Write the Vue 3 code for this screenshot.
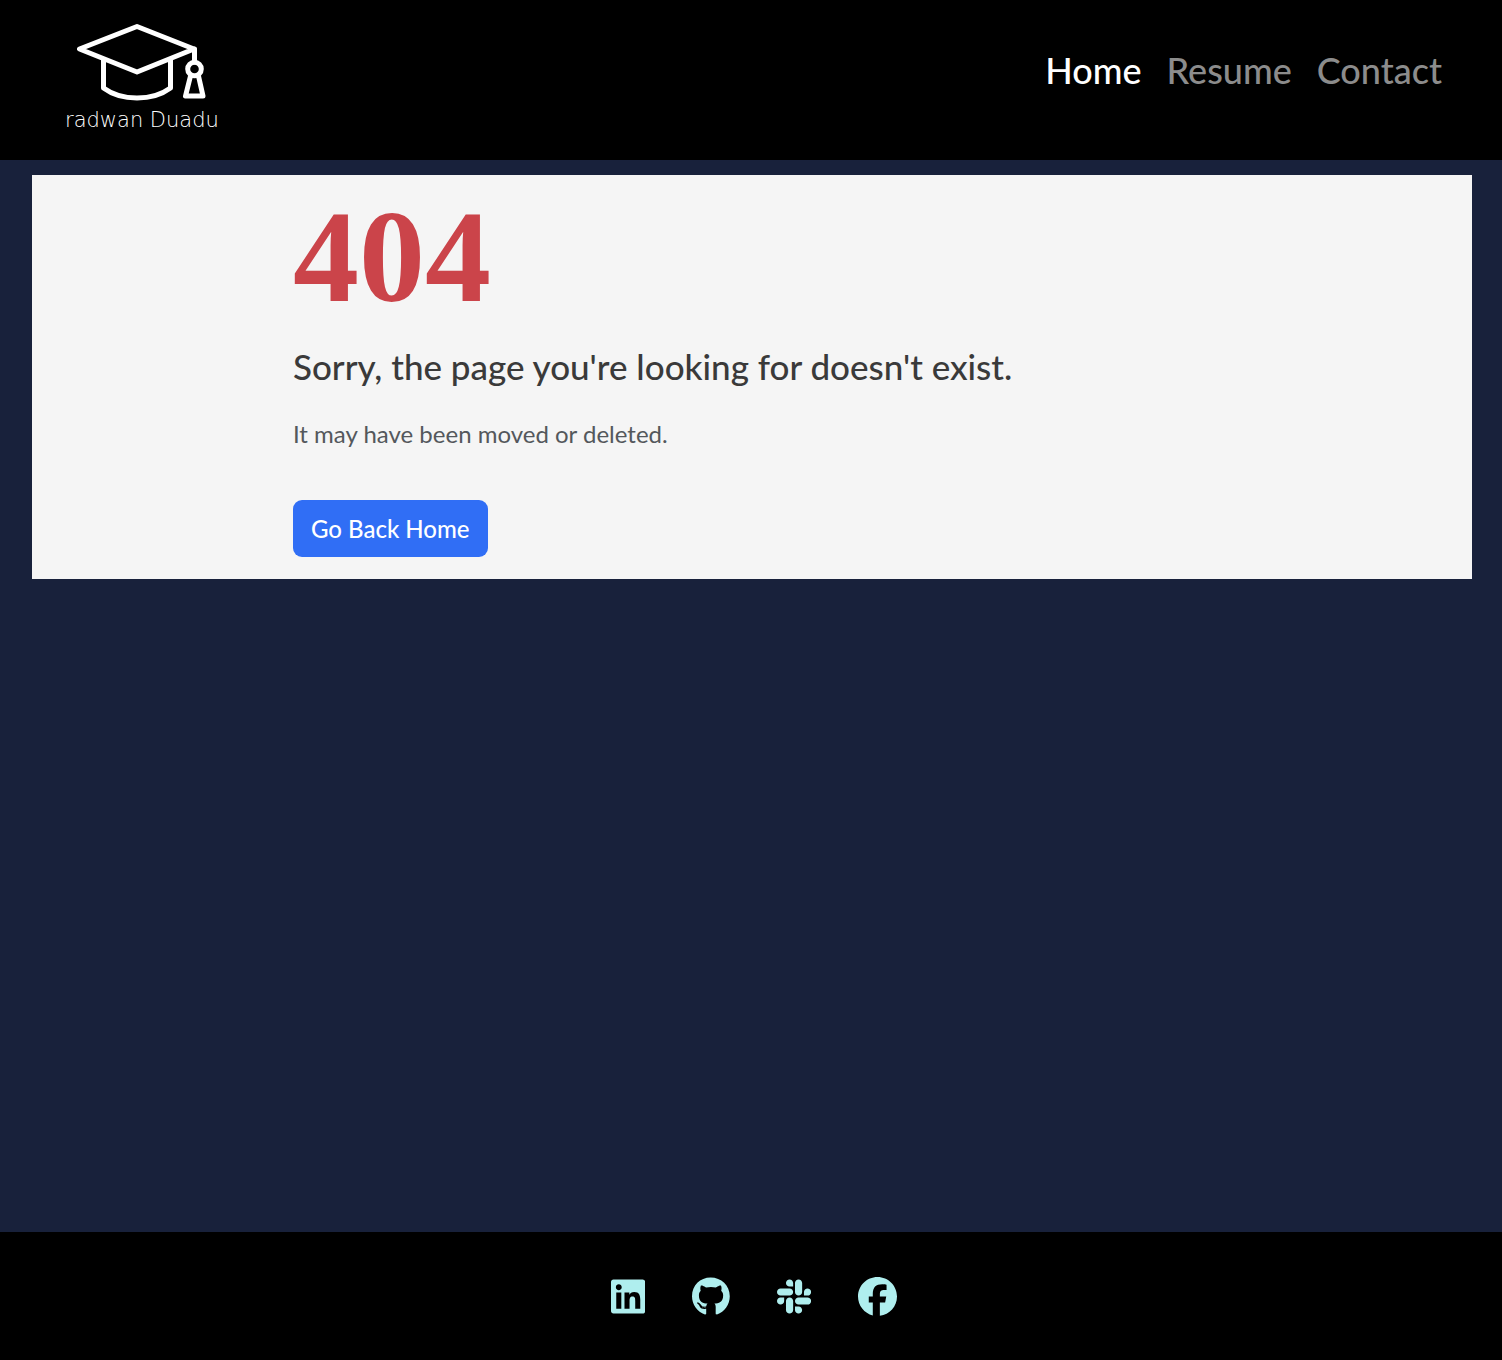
<script setup>
const links = [
  { label: 'Home', active: true },
  { label: 'Resume', active: false },
  { label: 'Contact', active: false },
]

const socials = [
  {
    name: 'LinkedIn',
    width: 448,
    path: 'M416 32H31.9C14.3 32 0 46.5 0 64.3v383.4C0 465.5 14.3 480 31.9 480H416c17.6 0 32-14.5 32-32.3V64.3c0-17.8-14.4-32.3-32-32.3zM135.4 416H69V202.2h66.5V416zm-33.2-243c-21.3 0-38.5-17.3-38.5-38.5S80.9 96 102.2 96c21.2 0 38.5 17.3 38.5 38.5 0 21.3-17.2 38.5-38.5 38.5zm282.1 243h-66.4V312c0-24.8-.5-56.7-34.5-56.7-34.6 0-39.9 27-39.9 54.9V416h-66.4V202.2h63.7v29.2h.9c8.9-16.8 30.6-34.5 62.9-34.5 67.2 0 79.7 44.3 79.7 101.9V416z',
  },
  {
    name: 'GitHub',
    width: 496,
    path: 'M165.9 397.4c0 2-2.3 3.6-5.2 3.6-3.3.3-5.6-1.3-5.6-3.6 0-2 2.3-3.6 5.2-3.6 3-.3 5.6 1.3 5.6 3.6zm-31.1-4.5c-.7 2 1.3 4.3 4.3 4.9 2.6 1 5.6 0 6.2-2s-1.3-4.3-4.3-5.2c-2.6-.7-5.5.3-6.2 2.3zm44.2-1.7c-2.9.7-4.9 2.6-4.6 4.9.3 2 2.9 3.3 5.9 2.6 2.9-.7 4.9-2.6 4.6-4.6-.3-1.9-3-3.2-5.9-2.9zM244.8 8C106.1 8 0 113.3 0 252c0 110.9 69.8 205.8 169.5 239.2 12.8 2.3 17.3-5.6 17.3-12.1 0-6.2-.3-40.4-.3-61.4 0 0-70 15-84.7-29.8 0 0-11.4-29.1-27.8-36.6 0 0-22.9-15.7 1.6-15.4 0 0 24.9 2 38.6 25.8 21.9 38.6 58.6 27.5 72.9 20.9 2.3-16 8.8-27.1 16-33.7-55.9-6.2-112.3-14.3-112.3-110.5 0-27.5 7.6-41.3 23.6-58.9-2.6-6.5-11.1-33.3 2.6-67.9 20.9-6.5 69 27 69 27 20-5.6 41.5-8.5 62.8-8.5s42.8 2.9 62.8 8.5c0 0 48.1-33.6 69-27 13.7 34.7 5.2 61.4 2.6 67.9 16 17.7 25.8 31.5 25.8 58.9 0 96.5-58.9 104.2-114.8 110.5 9.2 7.9 17 22.9 17 46.4 0 33.7-.3 75.4-.3 83.6 0 6.5 4.6 14.4 17.3 12.1C428.2 457.8 496 362.9 496 252 496 113.3 383.5 8 244.8 8z',
  },
  {
    name: 'Slack',
    width: 448,
    path: 'M94.12 315.1c0 25.9-21.16 47.06-47.06 47.06S0 341 0 315.1c0-25.9 21.16-47.06 47.06-47.06h47.06v47.06zm23.72 0c0-25.9 21.16-47.06 47.06-47.06s47.06 21.16 47.06 47.06v117.84c0 25.9-21.16 47.06-47.06 47.06s-47.06-21.16-47.06-47.06V315.1zm47.06-188.98c-25.9 0-47.06-21.16-47.06-47.06S139 32 164.9 32s47.06 21.16 47.06 47.06v47.06H164.9zm0 23.72c25.9 0 47.06 21.16 47.06 47.06s-21.16 47.06-47.06 47.06H47.06C21.16 243.96 0 222.8 0 196.9s21.16-47.06 47.06-47.06H164.9zm188.98 47.06c0-25.9 21.16-47.06 47.06-47.06 25.9 0 47.06 21.16 47.06 47.06s-21.16 47.06-47.06 47.06h-47.06V196.9zm-23.72 0c0 25.9-21.16 47.06-47.06 47.06-25.9 0-47.06-21.16-47.06-47.06V79.06c0-25.9 21.16-47.06 47.06-47.06 25.9 0 47.06 21.16 47.06 47.06V196.9zM283.1 385.88c25.9 0 47.06 21.16 47.06 47.06 0 25.9-21.16 47.06-47.06 47.06-25.9 0-47.06-21.16-47.06-47.06v-47.06h47.06zm0-23.72c-25.9 0-47.06-21.16-47.06-47.06 0-25.9 21.16-47.06 47.06-47.06h117.84c25.9 0 47.06 21.16 47.06 47.06 0 25.9-21.16 47.06-47.06 47.06H283.1z',
  },
  {
    name: 'Facebook',
    width: 512,
    path: 'M512 256C512 114.6 397.4 0 256 0S0 114.6 0 256C0 376 82.7 476.8 194.2 504.5V334.2H141.4V256h52.8V222.3c0-87.1 39.4-127.5 125-127.5c16.2 0 44.2 3.2 55.7 6.4V172c-6-.6-16.5-1-29.6-1c-42 0-58.2 15.9-58.2 57.2V256h83.6l-14.4 78.2H287V510.1C413.8 494.8 512 386.9 512 256z',
  },
]
</script>

<template>
  <div class="page">
    <header class="header">
      <a class="brand" href="#">
        <svg class="cap" viewBox="0 0 132 80" aria-hidden="true">
          <g fill="none" stroke="#fff" stroke-width="5" stroke-linejoin="round" stroke-linecap="round">
            <path d="M60 4.500 117 27 60 50 2.500 27Z" />
            <path d="M26.500 38V66Q40 76 60 76T93.500 66V38" />
            <path d="M117.500 27V40" />
            <circle cx="117.500" cy="47" r="6.800" />
            <path d="M113.500 54 108.500 74H126L121.500 54" />
          </g>
        </svg>
        <span class="brand-name">radwan Duadu</span>
      </a>
      <nav class="nav">
        <a
          v-for="link in links"
          :key="link.label"
          href="#"
          class="nav-link"
          :class="{ active: link.active }"
        >{{ link.label }}</a>
      </nav>
    </header>

    <main class="main">
      <section class="card">
        <div class="message">
          <h1 class="code">404</h1>
          <h2 class="title">Sorry, the page you're looking for doesn't exist.</h2>
          <p class="detail">It may have been moved or deleted.</p>
          <button type="button" class="home-button">Go Back Home</button>
        </div>
      </section>
    </main>

    <footer class="footer">
      <a v-for="item in socials" :key="item.name" href="#" class="social" :aria-label="item.name">
        <svg class="social-icon" :viewBox="`0 0 ${item.width} 512`" aria-hidden="true">
          <path :d="item.path" />
        </svg>
      </a>
    </footer>
  </div>
</template>

<style>
body {
  margin: 0;
  background: #18213b;
}
</style>

<style scoped>
.page {
  display: flex;
  flex-direction: column;
  min-height: 100vh;
  background: #18213b;
  font-family: Lato, "Liberation Sans", sans-serif;
}

.header {
  display: flex;
  justify-content: space-between;
  align-items: flex-start;
  box-sizing: border-box;
  min-height: 160px;
  padding: 22px 60px 24px 65px;
  background: #000;
}

.brand {
  display: flex;
  flex-direction: column;
  gap: 6px;
  color: #fff;
  text-decoration: none;
}

.cap {
  width: 132px;
  height: 80px;
  margin-left: 12px;
}

.brand-name {
  font-family: "DejaVu Sans", sans-serif;
  font-weight: 200;
  font-size: 21px;
  line-height: 24px;
  white-space: nowrap;
}

.nav {
  display: flex;
  gap: 25px;
  padding-top: 24px;
}

.nav-link {
  color: #8c8c8c;
  font-size: 36px;
  font-weight: 500;
  line-height: 48px;
  text-decoration: none;
}

.nav-link.active {
  color: #fff;
}

.main {
  flex: 1;
  padding: 15px 30px 15px 32px;
}

.card {
  padding: 24px 24px 22px;
  background: #f5f5f5;
}

.message {
  max-width: 918px;
  margin: 0 auto;
}

.code {
  margin: 0 0 27px;
  color: #cb444a;
  font-family: "Liberation Serif", serif;
  font-size: 132px;
  font-weight: 700;
  line-height: 116px;
}

.title {
  margin: 0 0 26px;
  color: #3a3a3a;
  font-size: 35px;
  font-weight: 500;
  line-height: 48px;
}

.detail {
  margin: 0 0 48px;
  color: #54585c;
  font-size: 24px;
  line-height: 36px;
}

.home-button {
  display: block;
  padding: 10px 18px;
  border: 0;
  border-radius: 9px;
  background: #306ef5;
  color: #fff;
  font-family: inherit;
  font-size: 24px;
  font-weight: 500;
  line-height: 37px;
  cursor: pointer;
}

.footer {
  display: flex;
  justify-content: center;
  align-items: center;
  gap: 47px;
  box-sizing: border-box;
  min-height: 128px;
  padding-left: 6px;
  background: #000;
}

.social {
  display: flex;
}

.social-icon {
  height: 39px;
  fill: #afeeee;
}
</style>
